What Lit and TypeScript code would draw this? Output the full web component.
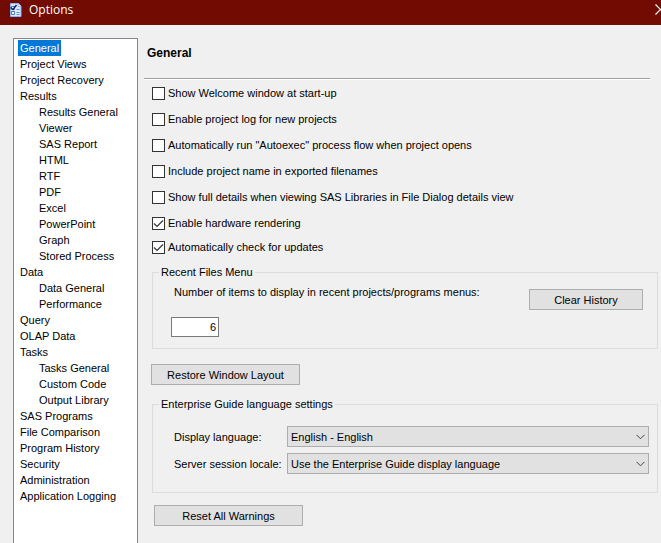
import { LitElement, html, css } from "lit";
import { customElement, state } from "lit/decorators.js";
import { classMap } from "lit/directives/class-map.js";

interface Page {
  name: string;
  children?: string[];
}

const PAGES: Page[] = [
  { name: "General" },
  { name: "Project Views" },
  { name: "Project Recovery" },
  {
    name: "Results",
    children: ["Results General", "Viewer", "SAS Report", "HTML", "RTF", "PDF", "Excel", "PowerPoint", "Graph", "Stored Process"],
  },
  { name: "Data", children: ["Data General", "Performance"] },
  { name: "Query" },
  { name: "OLAP Data" },
  { name: "Tasks", children: ["Tasks General", "Custom Code", "Output Library"] },
  { name: "SAS Programs" },
  { name: "File Comparison" },
  { name: "Program History" },
  { name: "Security" },
  { name: "Administration" },
  { name: "Application Logging" },
];

const SETTINGS = [
  { label: "Show Welcome window at start-up", on: false },
  { label: "Enable project log for new projects", on: false },
  { label: 'Automatically run "Autoexec" process flow when project opens', on: false },
  { label: "Include project name in exported filenames", on: false },
  { label: "Show full details when viewing SAS Libraries in File Dialog details view", on: false },
  { label: "Enable hardware rendering", on: true },
  { label: "Automatically check for updates", on: true },
];

@customElement("app-root")
export class AppRoot extends LitElement {
  @state() private selected = "General";

  static styles = css`
    :host {
      display: flex;
      flex-direction: column;
      min-height: 100vh;
      overflow: hidden;
      background: #f0f0f0;
      color: #000;
      font: 11px/16px "Liberation Sans", Arial, sans-serif;
    }
    * {
      box-sizing: border-box;
    }
    button,
    input,
    select {
      margin: 0;
      font: inherit;
      color: inherit;
      border-radius: 0;
    }
    .titlebar {
      display: flex;
      align-items: center;
      gap: 6px;
      height: 25px;
      padding: 0 0 6px 8px;
      background: #720c02;
      color: #fff;
      font: 12px/18px "Open Sans", "Noto Sans", sans-serif;
    }
    .title {
      flex: 1;
      font: inherit;
      margin: 0;
    }
    .close {
      display: flex;
      margin-right: -5px;
      padding: 0;
      border: 0;
      background: none;
    }
    .body {
      flex: 1;
      display: flex;
      gap: 6px;
      padding: 13px 0 0 13px;
    }
    .tree {
      flex: 0 0 125px;
      padding: 1px 4px;
      border: 1px solid #828790;
      border-bottom: 0;
      background: #fff;
    }
    .tree ul {
      margin: 0;
      padding: 0;
      list-style: none;
    }
    .tree ul ul {
      padding-left: 19px;
    }
    .node {
      display: block;
      width: max-content;
      padding: 0 2px;
      color: inherit;
      text-decoration: none;
      white-space: nowrap;
    }
    .node.current {
      background: #0078d7;
      color: #fff;
    }
    .page {
      flex: 1;
      min-width: 0;
    }
    .heading {
      margin: 0 11px 0 0;
      padding: 7px 3px 17px;
      border-bottom: 1px solid #a0a0a0;
      box-shadow: 0 1px #fff;
      font-size: 12px;
      line-height: 16px;
      font-weight: bold;
    }
    .content {
      display: flex;
      flex-direction: column;
      align-items: flex-start;
      padding: 6px 3px 16px 8px;
    }
    .checks {
      display: flex;
      flex-direction: column;
      gap: 10px;
    }
    .check {
      display: flex;
      align-items: center;
      gap: 3px;
    }
    .check:last-child {
      margin-top: -2px;
    }
    .box {
      display: grid;
      place-items: center;
    }
    .box input {
      grid-area: 1 / 1;
      appearance: none;
      width: 13px;
      height: 13px;
      border: 1px solid #333;
      background: #fff;
    }
    .box svg {
      grid-area: 1 / 1;
      pointer-events: none;
      visibility: hidden;
    }
    .box input:checked + svg {
      visibility: visible;
    }
    .group {
      align-self: stretch;
      min-width: 0;
      margin: 9px 0 0;
      padding: 0;
      border: 1px solid #dcdcdc;
    }
    .group legend {
      margin-left: 6px;
      padding: 0 2px;
    }
    .recent {
      display: flex;
      justify-content: space-between;
      align-items: flex-start;
      padding: 4px 14px 11px 21px;
    }
    .count {
      display: flex;
      flex-direction: column;
      align-items: flex-start;
      gap: 17px;
    }
    .count input {
      width: 48px;
      height: 20px;
      margin-left: -3px;
      padding: 0 2px;
      border: 1px solid #7a7a7a;
      background: #fff;
      text-align: right;
    }
    .push {
      height: 21px;
      padding: 0;
      border: 1px solid #adadad;
      background: #e1e1e1;
    }
    .clear {
      width: 114px;
      margin-top: 5px;
    }
    .wide {
      width: 149px;
    }
    .restore {
      margin: 15px 0 2px -1px;
    }
    .reset {
      margin: 12px 0 0 2px;
    }
    .languages {
      display: grid;
      grid-template-columns: 113px 1fr;
      align-items: center;
      row-gap: 6px;
      padding: 14px 8px 18px 21px;
    }
    .languages label {
      white-space: nowrap;
    }
    .drop {
      display: grid;
      align-items: center;
    }
    .drop select {
      grid-area: 1 / 1;
      appearance: none;
      width: 100%;
      height: 21px;
      padding: 0 20px 0 3px;
      border: 1px solid #adadad;
      background: #e1e1e1;
    }
    .drop svg {
      grid-area: 1 / 1;
      justify-self: end;
      margin-right: 4px;
      pointer-events: none;
    }
  `;

  private node(name: string) {
    return html`<a
      href="#"
      class=${classMap({ node: true, current: name === this.selected })}
      @click=${(e: Event) => {
        e.preventDefault();
        this.selected = name;
      }}
      >${name}</a
    >`;
  }

  private dropdown(id: string, label: string, value: string) {
    return html`
      <label for=${id}>${label}</label>
      <div class="drop">
        <select id=${id}>
          <option>${value}</option>
        </select>
        <svg width="9" height="6" viewBox="0 0 9 6" fill="none" stroke="#444" aria-hidden="true">
          <path d="M.5 .8 4.5 4.8 8.5 .8" />
        </svg>
      </div>
    `;
  }

  render() {
    return html`
      <header class="titlebar">
        <svg width="15" height="18" viewBox="0 0 15 18" aria-hidden="true">
          <path d="M2.500 2.500H10.500L13 5V15.500H2.500Z" fill="#dce9fb" stroke="#8db4f0" />
          <path d="M10 2.500V5.500H13" fill="#fff" stroke="#8db4f0" />
          <path d="M3.500 5.500h3v3h-3zM3.500 10.500h3v3h-3z" fill="#fff" stroke="#4a74c4" />
          <path d="M8.500 8.500h3M8.500 11.500h3M8.500 13.500h3" stroke="#5c8fdc" />
          <path d="M2.500 6.500 5 8.500 8.500 4" fill="none" stroke="#14246e" stroke-width="1.500" />
        </svg>
        <h1 class="title">Options</h1>
        <button class="close" aria-label="Close">
          <svg width="11" height="11" viewBox="0 0 11 11" stroke="#fff" stroke-width="1.200" aria-hidden="true">
            <path d="M.5 .5 10.500 10.500M10.500 .5 .5 10.500" />
          </svg>
        </button>
      </header>
      <div class="body">
        <nav class="tree" aria-label="Option pages">
          <ul>
            ${PAGES.map(
              (p) => html`<li>
                ${this.node(p.name)}
                ${p.children ? html`<ul>${p.children.map((c) => html`<li>${this.node(c)}</li>`)}</ul>` : ""}
              </li>`
            )}
          </ul>
        </nav>
        <main class="page">
          <h2 class="heading">General</h2>
          <div class="content">
            <div class="checks">
              ${SETTINGS.map(
                (s) => html`<label class="check">
                  <span class="box">
                    <input type="checkbox" .checked=${s.on} />
                    <svg width="11" height="11" viewBox="0 0 11 11" fill="none" stroke="#333" stroke-width="1.200" aria-hidden="true">
                      <path d="M1 5.500 4 8.500 10 2.500" />
                    </svg>
                  </span>
                  ${s.label}
                </label>`
              )}
            </div>
            <fieldset class="group">
              <legend>Recent Files Menu</legend>
              <div class="recent">
                <div class="count">
                  <label for="count">Number of items to display in recent projects/programs menus:</label>
                  <input id="count" type="text" inputmode="numeric" .value=${"6"} />
                </div>
                <button class="push clear">Clear History</button>
              </div>
            </fieldset>
            <button class="push wide restore">Restore Window Layout</button>
            <fieldset class="group">
              <legend>Enterprise Guide language settings</legend>
              <div class="languages">
                ${this.dropdown("display", "Display language:", "English - English")}
                ${this.dropdown("locale", "Server session locale:", "Use the Enterprise Guide display language")}
              </div>
            </fieldset>
            <button class="push wide reset">Reset All Warnings</button>
          </div>
        </main>
      </div>
    `;
  }
}
